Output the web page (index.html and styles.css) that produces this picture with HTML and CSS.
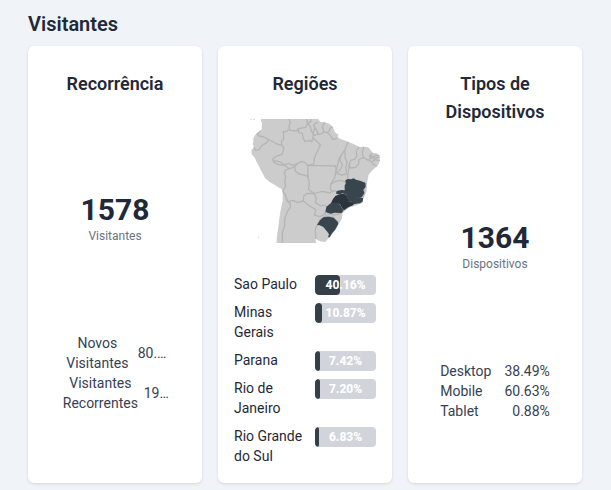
FILE: index.html
```html
<!DOCTYPE html>
<html lang="pt-BR">
<head>
    <meta charset="UTF-8">
    <meta name="viewport" content="width=device-width, initial-scale=1.0">
    <title>Visitantes</title>
    <link rel="stylesheet" href="styles.css">
</head>
<body>
    <main class="container">
        <h2>Visitantes</h2>
        <div class="cards">
            <section class="card">
                <h3>Recorrência</h3>
                <div class="chart">
                    <span class="total">1578</span>
                    <span class="caption">Visitantes</span>
                </div>
                <div class="legend">
                    <div class="legend-row">
                        <span class="legend-name">Novos Visitantes</span>
                        <span class="legend-value">80.42%</span>
                    </div>
                    <div class="legend-row">
                        <span class="legend-name">Visitantes Recorrentes</span>
                        <span class="legend-value">19.58%</span>
                    </div>
                </div>
            </section>
            <section class="card">
                <h3>Regiões</h3>
                <svg class="map" viewBox="-66 27 522 372" aria-hidden="true">
                    <path class="land" d="M61 24L66 40L65 56L62 62L48 71L40 84L40 96L38 102L42 112L34 121L35 132L45 145L50 156L60 175L75 204L88 215L103 224L125 238L128 244L128 272L122 300L118 325L116 345L112 370L109 402H229L226 386L240 394L256 396L264 386L272 378L286 360L296 342L305 328L308 310L318 300L330 292L350 286L367 278L371 262L380 244L381 218L386 194L398 180L414 166L420 152L418 136L409 130L398 128L387 113L376 110L358 111L345 104L325 95L300 86L294 82L295 74L285 67L278 51L268 41L254 37L241 36L233 24Z"/>
                    <path class="land" d="M31 27h4v2h-4zM39 27h5v2h-5zM54 380h3v3h-3z"/>
                    <g class="borders">
                        <path d="M62 62L52 73L57 78L72 81L86 89L80 98L66 106L57 119L46 121L42 112"/>
                        <path d="M86 89L100 96L110 102L126 106L124 94L131 88L130 64L140 65L146 57"/>
                        <path d="M146 24L151 39L147 47L150 61L170 63L175 56"/>
                        <path d="M199 24L203 40L197 52L181 55L175 56L176 67L187 71L190 85L195 95L207 91L215 95L219 84L220 71L214 64L211 50L203 40"/>
                        <path d="M203 40L213 34L211 24M219 70L225 53L221 47L226 39L234 37M225 53L233 66L232 73L242 72L252 66L247 51L254 37M252 66L263 68L273 52L278 51M220 76L232 73M263 68L270 75L278 88L291 85"/>
                        <path d="M126 106L132 115L126 133L108 139L98 148L103 158L113 163L128 166L145 160L160 166L174 160L184 154L196 158L202 166L222 162L223 144L241 105L233 97L219 84"/>
                        <path d="M103 152L120 156L134 165L148 176L136 181L133 188L137 201L134 214L137 228L128 244"/>
                        <path d="M148 176L164 171L172 160M164 171L166 183L177 192L196 196L204 200L203 166M202 166L287 168L289 188"/>
                        <path d="M324 96L315 119L303 137L297 145L293 164L287 189L284 203L272 223L271 238L278 245"/>
                        <path d="M303 137L300 151L307 164L303 176L290 190L304 195L320 192L317 173L322 157L315 144L315 119"/>
                        <path d="M326 161L331 174L347 172L356 161L357 148L371 143L367 131L371 111M357 111L349 123L350 139L344 148L332 151L327 168L324 191"/>
                        <path d="M371 143L385 151L392 144L388 138L397 130M385 151L395 156L405 149L419 152M388 138L401 140L407 136L418 137M392 144L406 144L419 142M395 156L402 165L410 168"/>
                        <path d="M204 199L208 222L205 238L220 249L225 250L247 244L270 249L278 242L289 243"/>
                        <path d="M272 223L286 214L303 211L316 216M324 191L323 207M378 220L371 231L373 251L368 265"/>
                        <path d="M128 244L136 255L143 275L151 281L151 292L142 305L135 324L133 350L127 369L127 402M143 275L160 271L173 278L190 273"/>
                        <path d="M190 273L191 258L202 250L222 251L229 265L226 278L240 287L253 286L258 288M190 273L206 286L227 299L224 315L238 320L249 316L255 306"/>
                        <path d="M255 306L258 318L240 329L231 346L226 358L227 386M262 311L282 315L304 310M258 318L280 322L295 339"/>
                    </g>
                    <path class="state" d="M316 211L323 207L333 208L341 205L348 209L360 212L376 218L377 231L370 239L373 249L366 261L352 264L346 270L326 277L319 254L309 250L298 253L288 251L290 243L304 240L314 241L314 226L317 221Z"/>
                    <path class="state" d="M326 277L345 270L358 262L369 265L368 274L361 280L346 281L335 286L324 291Z"/>
                    <path class="state" d="M273 279L293 279L301 285L305 294L311 301L305 309L284 308L272 311L256 306L259 290Z"/>
                    <path class="state" d="M231 345L240 331L250 322L265 320L281 323L293 335L295 342L285 360L276 370L269 382L264 382L267 373L262 365L249 350L239 346Z"/>
                    <path class="state top" d="M273 279L279 267L286 258L298 253L310 251L319 254L327 276L342 279L339 286L326 291L312 301L305 293L301 284L292 279Z"/>
                    <path class="state" d="M335 270L358 262L368 265L367 275L341 282Z"/>
                </svg>
                <ul class="regions">
                    <li><span class="region">Sao Paulo</span><div class="bar"><div class="fill" style="width: 40.16%"></div><span>40.16%</span></div></li>
                    <li><span class="region">Minas Gerais</span><div class="bar"><div class="fill" style="width: 10.87%"></div><span>10.87%</span></div></li>
                    <li><span class="region">Parana</span><div class="bar"><div class="fill" style="width: 7.42%"></div><span>7.42%</span></div></li>
                    <li><span class="region">Rio de Janeiro</span><div class="bar"><div class="fill" style="width: 7.20%"></div><span>7.20%</span></div></li>
                    <li><span class="region">Rio Grande do Sul</span><div class="bar"><div class="fill" style="width: 6.83%"></div><span>6.83%</span></div></li>
                </ul>
            </section>
            <section class="card">
                <h3>Tipos de Dispositivos</h3>
                <div class="chart">
                    <span class="total">1364</span>
                    <span class="caption">Dispositivos</span>
                </div>
                <table class="devices">
                    <tr><th scope="row">Desktop</th><td>38.49%</td></tr>
                    <tr><th scope="row">Mobile</th><td>60.63%</td></tr>
                    <tr><th scope="row">Tablet</th><td>0.88%</td></tr>
                </table>
            </section>
        </div>
    </main>
</body>
</html>
```
FILE: styles.css
```css
* {
    box-sizing: border-box;
}
body {
    margin: 0;
    background-color: #f0f4f8;
    color: #1f2937;
    font-family: Roboto, sans-serif;
    font-size: 14px;
    line-height: 20px;
}
.container {
    padding: 10px 29px 7px 28px;
}
h2, h3 {
    margin: 0;
    line-height: 28px;
    font-weight: 600;
}
h2 {
    margin-bottom: 8px;
    font-size: 20px;
}
h3 {
    padding: 0 16px;
    font-size: 18px;
    text-align: center;
}
.cards {
    display: grid;
    grid-template-columns: repeat(3, minmax(0, 1fr));
    gap: 16px;
}
.card {
    padding: 24px 0 17px;
    background-color: white;
    border-radius: 6px;
    box-shadow: 0 1px 3px rgba(0, 0, 0, 0.12);
}
.chart {
    display: flex;
    flex-direction: column;
    align-items: center;
    padding: 94px 0 89px;
}
.total {
    font-size: 30px;
    line-height: 36px;
    font-weight: 700;
}
.caption {
    font-size: 12px;
    line-height: 16px;
    color: #6b7280;
}
.legend {
    padding: 0 33px;
    color: #374151;
    text-align: center;
}
.legend-row {
    display: flex;
    align-items: center;
    gap: 4px;
}
.legend-value {
    overflow: hidden;
    text-overflow: ellipsis;
}
.map {
    display: block;
    width: 100%;
    margin: 21px 0 31px;
}
.land {
    fill: #cccccc;
}
.borders {
    fill: none;
    stroke: #b5b5b5;
    stroke-width: 4;
    stroke-linejoin: round;
}
.state {
    fill: #38454f;
}
.state.top {
    fill: #2c353e;
}
.regions {
    display: grid;
    gap: 8px;
    margin: 0;
    padding: 0 16px;
    list-style: none;
}
.regions li {
    display: grid;
    grid-template-columns: 4fr 3fr;
    align-items: start;
}
.region {
    padding-right: 8px;
}
.bar {
    display: grid;
    height: 20px;
    margin: 1px 0 -1px;
    background-color: #d1d5db;
    border-radius: 4px;
    overflow: hidden;
}
.bar > * {
    grid-area: 1 / 1;
}
.bar span {
    color: white;
    font-size: 12px;
    font-weight: 800;
    text-align: center;
}
.fill {
    background-color: #343f48;
    border-radius: 4px;
}
.devices {
    margin: 0 auto;
    border-collapse: collapse;
    color: #374151;
}
.devices th {
    padding: 0 13px 0 0;
    font-weight: 400;
    text-align: left;
}
.devices td {
    padding: 0;
    text-align: right;
}
```
